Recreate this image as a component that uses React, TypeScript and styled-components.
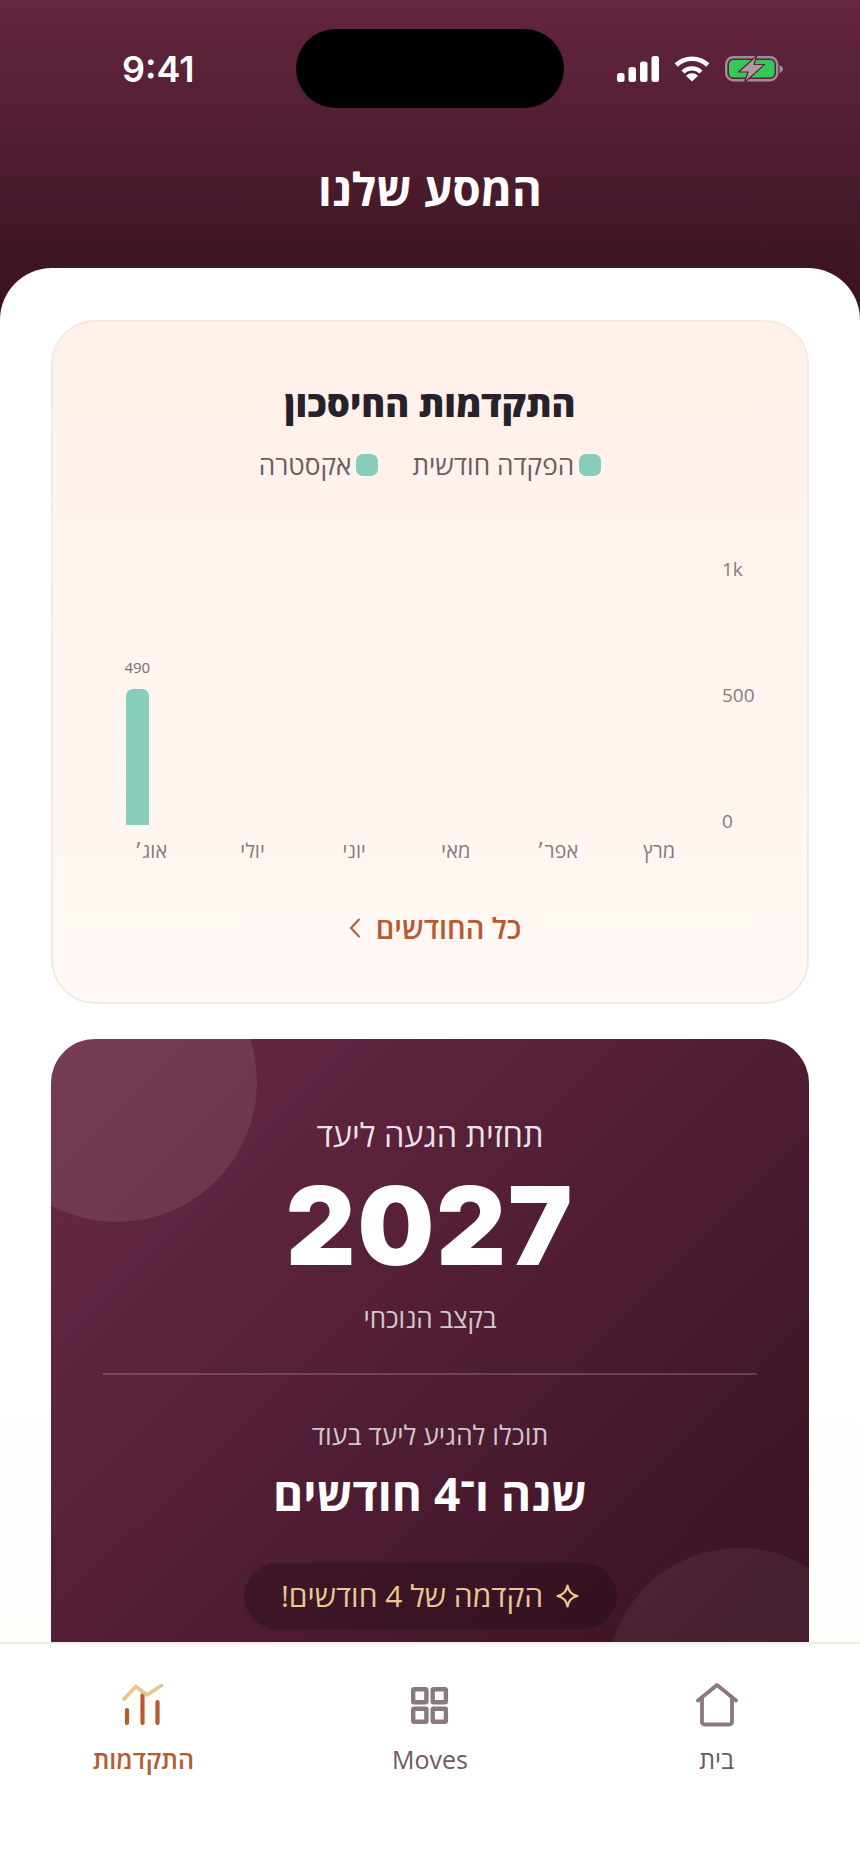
import React from "react";
import styled, { createGlobalStyle } from "styled-components";

const FONT = `"Open Sans", "Noto Sans", "Liberation Sans", sans-serif`;

const Global = createGlobalStyle`
  html, body { margin: 0; padding: 0; background: #fff; }
  * { box-sizing: border-box; }
  #root { width: 860px; height: 1864px; }
`;

const Screen = styled.div`
  direction: rtl;
  width: 860px;
  height: 1864px;
  display: flex;
  flex-direction: column;
  overflow: hidden;
  font-family: ${FONT};
  background: #fff;
`;

const Header = styled.header`
  flex: 0 0 320px;
  background: linear-gradient(180deg, #642640 0%, #37121f 100%);
  padding: 29px 0 0;
  color: #fff;
`;

const StatusBar = styled.div`
  direction: ltr;
  display: flex;
  align-items: center;
  height: 79px;
  padding-left: 122px;
`;

const Clock = styled.div`
  font-family: Inter, "Liberation Sans", sans-serif;
  font-size: 36px;
  font-weight: 600;
  line-height: 1;
  width: 74px;
`;

const Island = styled.div`
  width: 268px;
  height: 79px;
  margin: 0 53px 0 100px;
  background: #000;
  border-radius: 40px;
`;

const StatusIcons = styled.div`
  display: flex;
  align-items: center;
  gap: 15px;
`;

const PageTitle = styled.h1`
  margin: 50px 0 0;
  text-align: center;
  font-size: 45.5px;
  line-height: 60px;
  font-weight: 700;
`;

const Sheet = styled.main`
  flex: 1;
  min-height: 0;
  margin-top: -52px;
  padding: 52px 51px 0;
  border-radius: 52px 52px 0 0;
  background: linear-gradient(180deg, #ffffff 0%, #ffffff 75%, #fffdfa 100%);
  overflow: hidden;
  position: relative;
`;

const ChartCard = styled.section`
  height: 684px;
  padding: 57px 47px 0;
  border: 2px solid #f2e9e2;
  border-radius: 44px;
  background: linear-gradient(180deg, #fff0e9 0%, #fff8f4 100%);
`;

const CardTitle = styled.h2`
  margin: 0;
  text-align: center;
  font-size: 36.4px;
  line-height: 48px;
  font-weight: 800;
  color: #26212b;
`;

const Legend = styled.div`
  display: flex;
  justify-content: center;
  gap: 34px;
  margin-top: 20px;
`;

const LegendItem = styled.div`
  display: flex;
  align-items: center;
  gap: 5px;
  font-size: 26.2px;
  line-height: 36px;
  color: #6e5a63;
`;

const Swatch = styled.span`
  width: 22px;
  height: 22px;
  border-radius: 7px;
  background: #88ccbc;
`;

const Chart = styled.div`
  display: flex;
  margin-top: 74px;
  align-items: flex-start;
`;

const Axis = styled.div`
  flex: 0 0 38px;
  height: 277px;
  margin-left: 12px;
  display: flex;
  flex-direction: column;
  justify-content: space-between;
  text-align: left;
  direction: ltr;
  font-size: 19px;
  line-height: 25px;
  color: #8a7880;
`;

const Plot = styled.div`
  flex: 0 0 610px;
  display: grid;
  grid-template-columns: repeat(6, 1fr);
`;

const Column = styled.div`
  display: flex;
  flex-direction: column;
  align-items: center;
`;

const BarGroup = styled.div`
  height: 268px;
  display: flex;
  gap: 4px;
  align-items: flex-end;
`;

const BarSlot = styled.div`
  width: 23px;
  display: flex;
  flex-direction: column;
  align-items: center;
`;

const BarValue = styled.span`
  font-size: 15px;
  line-height: 20px;
  margin-bottom: 12px;
  color: #7d6a73;
`;

const Bar = styled.div<{ $h: number }>`
  width: 23px;
  height: ${(p) => p.$h}px;
  border-radius: 7px 7px 0 0;
  background: #88ccbc;
`;

const Month = styled.div`
  margin-top: 13px;
  font-size: 20px;
  line-height: 26px;
  color: #8a7880;
`;

const AllLink = styled.a`
  display: flex;
  align-items: center;
  justify-content: center;
  gap: 15px;
  margin-top: 44px;
  padding-left: 10px;
  font-size: 29px;
  line-height: 40px;
  font-weight: 600;
  color: #b85a30;
`;

const Forecast = styled.section`
  position: relative;
  overflow: hidden;
  margin-top: 35px;
  height: 760px;
  padding: 76px 52px 0;
  border-radius: 44px;
  text-align: center;
  color: #fff;
  background: linear-gradient(135deg, #6b2a47 0%, #4e1c33 50%, #33111f 100%);
`;

const Blob = styled.div<{ $size: number; $top: number; $side: "left" | "right"; $off: number; $a: number }>`
  position: absolute;
  top: ${(p) => p.$top}px;
  ${(p) => p.$side}: ${(p) => p.$off}px;
  width: ${(p) => p.$size}px;
  height: ${(p) => p.$size}px;
  border-radius: 50%;
  background: rgba(255, 255, 255, ${(p) => p.$a});
`;

const Layer = styled.div`
  position: relative;
`;

const Kicker = styled.div`
  font-size: 32.5px;
  line-height: 40px;
  color: rgba(255, 255, 255, 0.88);
`;

const Year = styled.div`
  margin-top: 15px;
  font-family: Inter, "Liberation Sans", sans-serif;
  font-size: 108px;
  line-height: 112px;
  font-weight: 900;
  letter-spacing: 2px;
`;

const Note = styled.div<{ $top: number; $size: number }>`
  margin-top: ${(p) => p.$top}px;
  font-size: ${(p) => p.$size}px;
  line-height: 34px;
  color: rgba(255, 255, 255, 0.76);
`;

const Divider = styled.hr`
  margin: 38px 0 0;
  border: 0;
  height: 2px;
  background: rgba(255, 255, 255, 0.18);
`;

const Duration = styled.div`
  margin-top: 11px;
  font-size: 46px;
  line-height: 60px;
  font-weight: 700;
`;

const Pill = styled.div`
  display: flex;
  width: 373px;
  height: 66px;
  margin: 40px auto 0;
  align-items: center;
  justify-content: center;
  gap: 13px;
  border-radius: 33px;
  background: rgba(0, 0, 0, 0.2);
  color: #eac78f;
  font-size: 30px;
  line-height: 40px;
`;

const TabBar = styled.nav`
  flex: 0 0 222px;
  display: grid;
  grid-template-columns: repeat(3, 1fr);
  background: #fff;
  border-top: 2px solid #f1ece8;
  padding-top: 38px;
  position: relative;
`;

const Tab = styled.div<{ $active?: boolean }>`
  display: flex;
  flex-direction: column;
  align-items: center;
  font-size: 25px;
  line-height: 34px;
  font-weight: ${(p) => (p.$active ? 600 : 500)};
  color: ${(p) => (p.$active ? "#b85a30" : "#6e5a63")};
`;

const TabIcon = styled.div`
  height: 46px;
  display: flex;
  align-items: center;
  justify-content: center;
  margin-bottom: 14px;
`;

const Signal = () => (
  <svg width="42" height="26" viewBox="0 0 42 26" fill="#fff">
    <rect x="0" y="17" width="7.5" height="9" rx="2.5" />
    <rect x="11.5" y="11" width="7.5" height="15" rx="2.5" />
    <rect x="23" y="5.5" width="7.5" height="20.5" rx="2.5" />
    <rect x="34.5" y="0" width="7.5" height="26" rx="2.5" />
  </svg>
);

const Wifi = () => (
  <svg width="36" height="26" viewBox="0 0 36 26" fill="none" stroke="#fff">
    <path d="M2.2 9 A23 23 0 0 1 33.8 9" strokeWidth="4.6" />
    <path d="M9 16 A13 13 0 0 1 27 16" strokeWidth="4.4" />
    <path d="M18 25.5 L12 19.8 A8.5 8.5 0 0 1 24 19.8 Z" fill="#fff" stroke="none" />
  </svg>
);

const Battery = () => (
  <svg width="59" height="28" viewBox="0 0 59 28" fill="none">
    <rect x="1.2" y="2.2" width="51" height="23" rx="7" stroke="#a08c95" strokeWidth="2.4" />
    <rect x="4" y="5" width="45.5" height="17.5" rx="4.5" fill="#34c759" />
    <path d="M54.5 10 C57 11 58 12.5 58 14 C58 15.5 57 17 54.5 18 Z" fill="#a08c95" />
    <path d="M32 0.5 L13.5 17 H23 L19.5 27.5 L39.5 9.5 H29 Z" fill="#b09aa0" stroke="#5a2239" strokeWidth="1.2" strokeLinejoin="round" />
  </svg>
);

const Chevron = () => (
  <svg width="12" height="20" viewBox="0 0 12 20" fill="none" stroke="#b85a30" strokeWidth="2" strokeLinecap="round" strokeLinejoin="round">
    <path d="M10 1.5 L2 10 L10 18.5" />
  </svg>
);

const Sparkle = () => (
  <svg width="23" height="24" viewBox="0 0 23 24" fill="none" stroke="#eac78f" strokeWidth="2.2" strokeLinejoin="round">
    <path d="M11.5 1.5 C12.5 7.5 15.5 10.8 21.5 12 C15.5 13.2 12.5 16.5 11.5 22.5 C10.5 16.5 7.5 13.2 1.5 12 C7.5 10.8 10.5 7.5 11.5 1.5 Z" />
  </svg>
);

const HomeIcon = () => (
  <svg width="42" height="44" viewBox="0 0 42 44" fill="none" stroke="#8a7880" strokeWidth="3.8" strokeLinecap="round" strokeLinejoin="round">
    <path d="M2 17.5 L21 2 L40 17.5" />
    <path d="M6 14.5 V39 a2.5 2.5 0 0 0 2.5 2.5 H33.5 a2.5 2.5 0 0 0 2.5 -2.5 V14.5" />
  </svg>
);

const GridIcon = () => (
  <svg width="38" height="37" viewBox="0 0 38 37" fill="none" stroke="#8a7880" strokeWidth="4.4" strokeLinejoin="round">
    <rect x="2.2" y="2.2" width="13.2" height="13" rx="1" />
    <rect x="21.7" y="2.2" width="13.2" height="13" rx="1" />
    <rect x="2.2" y="21.7" width="13.2" height="13" rx="1" />
    <rect x="21.7" y="21.7" width="13.2" height="13" rx="1" />
  </svg>
);

const ProgressIcon = () => (
  <svg width="42" height="42" viewBox="0 0 42 42" fill="none" strokeLinecap="round" strokeLinejoin="round">
    <path d="M5 26 V39 M20.5 11 V39 M35.5 18 V39" stroke="#b85a30" strokeWidth="4.2" />
    <path d="M2 15 L14 2.5 L25 11 L39.5 1.5" stroke="#e8c48e" strokeWidth="3.6" />
  </svg>
);

const months = ["מרץ", "אפר׳", "מאי", "יוני", "יולי", "אוג׳"];

export default function App() {
  return (
    <Screen>
      <Global />
      <Header>
        <StatusBar>
          <Clock>9:41</Clock>
          <Island />
          <StatusIcons>
            <Signal />
            <Wifi />
            <Battery />
          </StatusIcons>
        </StatusBar>
        <PageTitle>המסע שלנו</PageTitle>
      </Header>
      <Sheet>
        <ChartCard>
          <CardTitle>התקדמות החיסכון</CardTitle>
          <Legend>
            <LegendItem>
              <Swatch />
              הפקדה חודשית
            </LegendItem>
            <LegendItem>
              <Swatch />
              אקסטרה
            </LegendItem>
          </Legend>
          <Chart>
            <Axis>
              <span>1k</span>
              <span>500</span>
              <span>0</span>
            </Axis>
            <Plot>
              {months.map((m, i) => (
                <Column key={m}>
                  <BarGroup>
                    <BarSlot />
                    <BarSlot>
                      {i === 5 && (
                        <>
                          <BarValue>490</BarValue>
                          <Bar $h={136} />
                        </>
                      )}
                    </BarSlot>
                  </BarGroup>
                  <Month>{m}</Month>
                </Column>
              ))}
            </Plot>
          </Chart>
          <AllLink>
            כל החודשים
            <Chevron />
          </AllLink>
        </ChartCard>
        <Forecast>
          <Blob $size={280} $top={-97} $side="left" $off={-74} $a={0.085} />
          <Blob $size={264} $top={509} $side="right" $off={-62} $a={0.055} />
          <Layer>
            <Kicker>תחזית הגעה ליעד</Kicker>
            <Year>2027</Year>
            <Note $top={19} $size={26}>בקצב הנוכחי</Note>
            <Divider />
            <Note $top={43} $size={26.5}>תוכלו להגיע ליעד בעוד</Note>
            <Duration>שנה ו־4 חודשים</Duration>
            <Pill>
              <Sparkle />
              הקדמה של 4 חודשים!
            </Pill>
          </Layer>
        </Forecast>
      </Sheet>
      <TabBar>
        <Tab>
          <TabIcon>
            <HomeIcon />
          </TabIcon>
          בית
        </Tab>
        <Tab>
          <TabIcon>
            <GridIcon />
          </TabIcon>
          Moves
        </Tab>
        <Tab $active>
          <TabIcon>
            <ProgressIcon />
          </TabIcon>
          התקדמות
        </Tab>
      </TabBar>
    </Screen>
  );
}
